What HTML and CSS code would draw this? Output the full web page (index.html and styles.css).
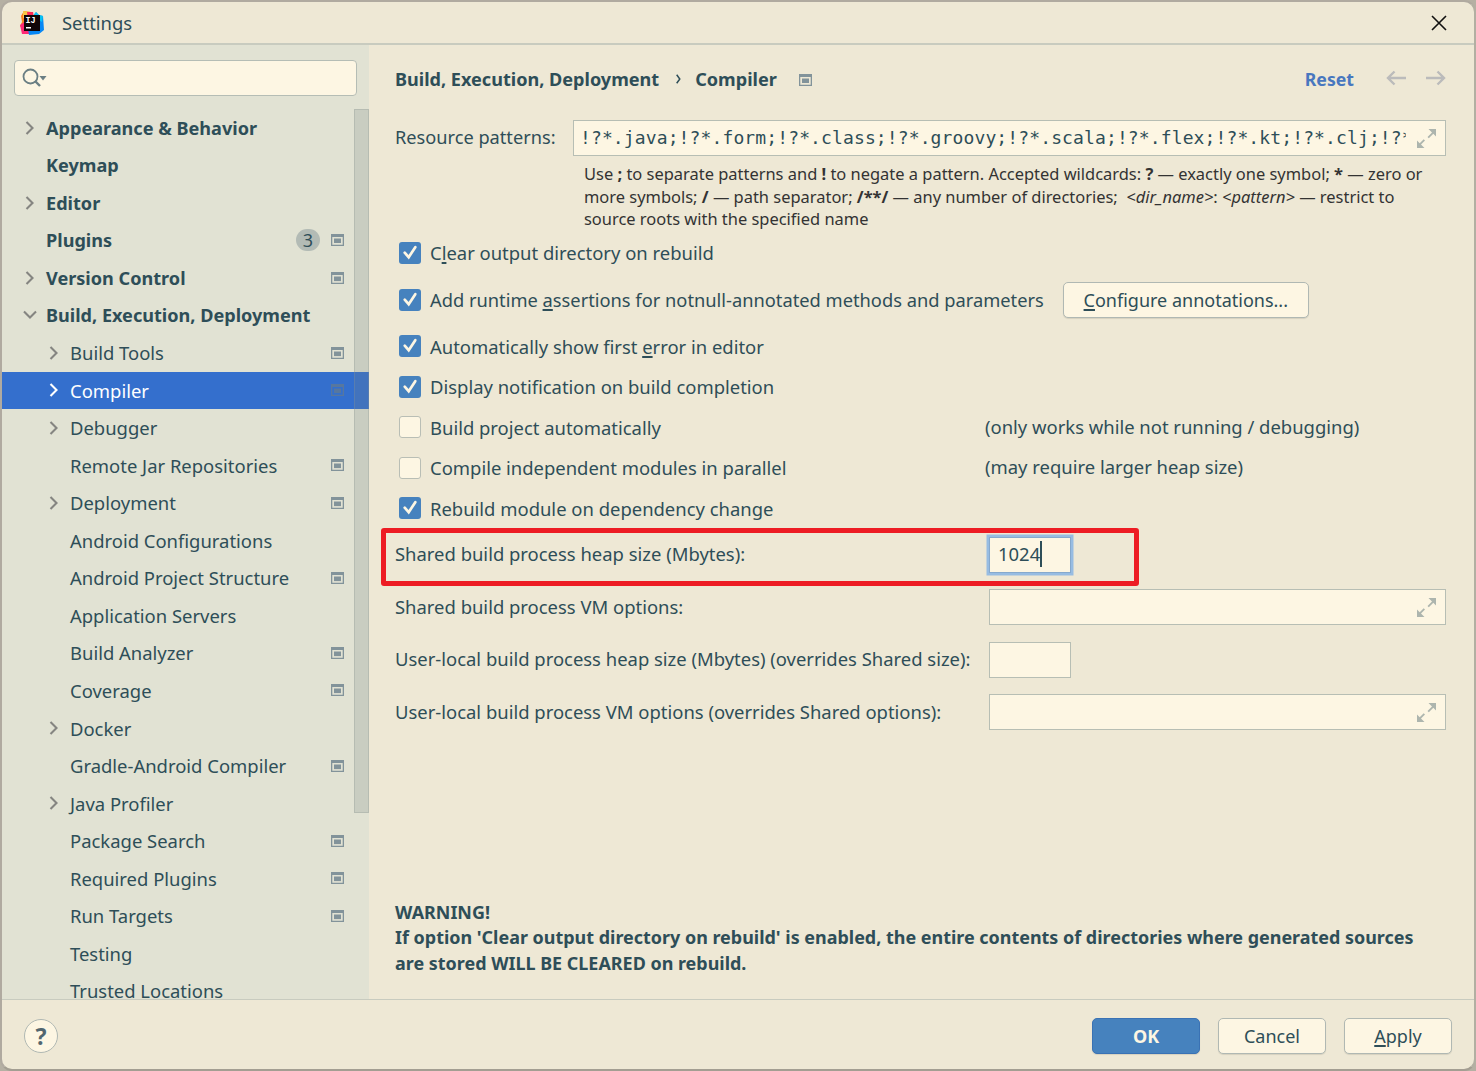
FILE: index.html
```
<!DOCTYPE html>
<html lang="en">

<head>
    <meta charset="UTF-8">
    <meta name="viewport" content="width=device-width, initial-scale=1.0">
    <title>Settings</title>
    <link rel="stylesheet" href="styles.css">
</head>

<body>
    <svg class="symbols">
        <symbol id="chevron-right" viewBox="0 0 10 14"><path d="M1.5 1l6 6-6 6" fill="none" stroke="currentColor" stroke-width="2.1"/></symbol>
        <symbol id="chevron-down" viewBox="0 0 14 10"><path d="M1 1.5l6 6 6-6" fill="none" stroke="currentColor" stroke-width="2.1"/></symbol>
        <symbol id="project" viewBox="0 0 13 12"><path d="M0 0h13v12H0zM1.3 3v7.7h10.4V3z" fill="currentColor" fill-rule="evenodd"/><path d="M3 4.5h7v4.6H3z" fill="currentColor"/></symbol>
        <symbol id="expand" viewBox="0 0 19 19"><path d="M11.5 0H19v7.5l-2.7-2.7-4.5 4.5-1.3-1.3 4.5-4.5zM0 11.5l2.7 2.7 4-4 1.3 1.3-4 4L7.5 19H0z" fill="currentColor"/></symbol>
        <symbol id="check" viewBox="0 0 22 22"><path d="M5.7 10.7l4 4.5 6.6-10" fill="none" stroke="#fdf6e3" stroke-width="2.7" stroke-linecap="round"/></symbol>
    </svg>

    <div class="window">
        <div class="titlebar">
            <svg class="logo" width="24" height="24" viewBox="0 0 24 24">
                <path d="M1 5l3-5 7 1 2 3-2 9-9 4-2-2 2-4z" fill="#fc801d"/>
                <path d="M3 0l8 1 3 4-4 5-7-3z" fill="#f9c846"/>
                <path d="M7 1h6l1 6-6 2z" fill="#fe2857"/>
                <path d="M0 14l7-5 6 9-2 5-9 0z" fill="#fe2875"/>
                <path d="M13 5l3-4 3 3 4 1 1 14-5 4-10 1-1-6z" fill="#0787f5"/>
                <path d="M13 5l3-4 3 3 4 1-1 6z" fill="#07c3f2"/>
                <rect x="4" y="4" width="16" height="16" fill="#100508"/>
                <rect x="6" y="16" width="5" height="1.5" fill="#fff"/>
                <text class="logo-text" x="5.5" y="12">IJ</text>
            </svg>
            <span class="title">Settings</span>
            <svg class="close" width="16" height="16" viewBox="0 0 16 16"><path d="M1 1l14 14M15 1L1 15" stroke="#111" stroke-width="1.6"/></svg>
        </div>

        <div class="content">
            <div class="sidebar">
                <div class="search">
                    <svg width="25" height="20" viewBox="0 0 25 20"><circle cx="8.5" cy="8.5" r="7" fill="none" stroke="#6b7f84" stroke-width="1.8"/><path d="M13 13l5 5" stroke="#6b7f84" stroke-width="2.4"/><path d="M17.5 8h7l-3.5 4.5z" fill="#6b7f84"/></svg>
                </div>
                <div class="tree">
                    <div class="item top"><svg class="arrow"><use href="#chevron-right"/></svg><span>Appearance &amp; Behavior</span></div>
                    <div class="item top"><span>Keymap</span></div>
                    <div class="item top"><svg class="arrow"><use href="#chevron-right"/></svg><span>Editor</span></div>
                    <div class="item top"><span>Plugins</span><b class="count">3</b><svg class="project"><use href="#project"/></svg></div>
                    <div class="item top"><svg class="arrow"><use href="#chevron-right"/></svg><span>Version Control</span><svg class="project"><use href="#project"/></svg></div>
                    <div class="item top"><svg class="arrow down"><use href="#chevron-down"/></svg><span>Build, Execution, Deployment</span></div>
                    <div class="item"><svg class="arrow"><use href="#chevron-right"/></svg><span>Build Tools</span><svg class="project"><use href="#project"/></svg></div>
                    <div class="item selected"><svg class="arrow"><use href="#chevron-right"/></svg><span>Compiler</span><svg class="project"><use href="#project"/></svg></div>
                    <div class="item"><svg class="arrow"><use href="#chevron-right"/></svg><span>Debugger</span></div>
                    <div class="item"><span>Remote Jar Repositories</span><svg class="project"><use href="#project"/></svg></div>
                    <div class="item"><svg class="arrow"><use href="#chevron-right"/></svg><span>Deployment</span><svg class="project"><use href="#project"/></svg></div>
                    <div class="item"><span>Android Configurations</span></div>
                    <div class="item"><span>Android Project Structure</span><svg class="project"><use href="#project"/></svg></div>
                    <div class="item"><span>Application Servers</span></div>
                    <div class="item"><span>Build Analyzer</span><svg class="project"><use href="#project"/></svg></div>
                    <div class="item"><span>Coverage</span><svg class="project"><use href="#project"/></svg></div>
                    <div class="item"><svg class="arrow"><use href="#chevron-right"/></svg><span>Docker</span></div>
                    <div class="item"><span>Gradle-Android Compiler</span><svg class="project"><use href="#project"/></svg></div>
                    <div class="item"><svg class="arrow"><use href="#chevron-right"/></svg><span>Java Profiler</span></div>
                    <div class="item"><span>Package Search</span><svg class="project"><use href="#project"/></svg></div>
                    <div class="item"><span>Required Plugins</span><svg class="project"><use href="#project"/></svg></div>
                    <div class="item"><span>Run Targets</span><svg class="project"><use href="#project"/></svg></div>
                    <div class="item"><span>Testing</span></div>
                    <div class="item"><span>Trusted Locations</span></div>
                    <div class="scrollbar"></div>
                </div>
            </div>

            <div class="main">
                <div class="breadcrumb">
                    <span>Build, Execution, Deployment</span>
                    <svg class="separator" width="5" height="10" viewBox="0 0 5 10"><path d="M.7.7L3.8 5 .7 9.3" fill="none" stroke="currentColor" stroke-width="1.5"/></svg>
                    <span>Compiler</span>
                    <svg class="project"><use href="#project"/></svg>
                    <a class="reset">Reset</a>
                    <svg class="nav" width="20" height="16" viewBox="0 0 20 16"><path d="M20 8H2M8.5 1.5L2 8l6.5 6.5" fill="none" stroke="currentColor" stroke-width="2.4"/></svg>
                    <svg class="nav" width="20" height="16" viewBox="0 0 20 16"><path d="M0 8h18M11.5 1.5L18 8l-6.5 6.5" fill="none" stroke="currentColor" stroke-width="2.4"/></svg>
                </div>

                <div class="patterns">
                    <label>Resource patterns:</label>
                    <div class="field">
                        <span class="mono">!?*.java;!?*.form;!?*.class;!?*.groovy;!?*.scala;!?*.flex;!?*.kt;!?*.clj;!?*</span>
                        <svg class="expand"><use href="#expand"/></svg>
                    </div>
                </div>
                <p class="help">Use <b>;</b> to separate patterns and <b>!</b> to negate a pattern. Accepted wildcards: <b>?</b> — exactly one symbol; <b>*</b> — zero or<br>more symbols; <b>/</b> — path separator; <b>/**/</b> — any number of directories; <i>&nbsp;&lt;dir_name&gt;</i>: <i>&lt;pattern&gt;</i> — restrict to<br>source roots with the specified name</p>

                <div class="options">
                    <div class="option"><span class="box checked"><svg><use href="#check"/></svg></span><label>C<u>l</u>ear output directory on rebuild</label></div>
                    <div class="option tall"><span class="box checked"><svg><use href="#check"/></svg></span><label>Add runtime <u>a</u>ssertions for notnull-annotated methods and parameters</label><button class="configure"><u>C</u>onfigure annotations...</button></div>
                    <div class="option"><span class="box checked"><svg><use href="#check"/></svg></span><label>Automatically show first <u>e</u>rror in editor</label></div>
                    <div class="option"><span class="box checked"><svg><use href="#check"/></svg></span><label>Display notification on build completion</label></div>
                    <div class="option"><span class="box"></span><label>Build project automatically</label><span class="note">(only works while not running / debugging)</span></div>
                    <div class="option"><span class="box"></span><label>Compile independent modules in parallel</label><span class="note">(may require larger heap size)</span></div>
                    <div class="option"><span class="box checked"><svg><use href="#check"/></svg></span><label>Rebuild module on dependency change</label></div>
                </div>

                <div class="form">
                    <label>Shared build process heap size (Mbytes):</label>
                    <div class="field small focused"><span>1024</span><span class="caret"></span></div>
                    <label>Shared build process VM options:</label>
                    <div class="field"><svg class="expand"><use href="#expand"/></svg></div>
                    <label>User-local build process heap size (Mbytes) (overrides Shared size):</label>
                    <div class="field small"></div>
                    <label>User-local build process VM options (overrides Shared options):</label>
                    <div class="field"><svg class="expand"><use href="#expand"/></svg></div>
                    <div class="highlight"></div>
                </div>

                <div class="warning">WARNING!<br>If option 'Clear output directory on rebuild' is enabled, the entire contents of directories where generated sources<br>are stored WILL BE CLEARED on rebuild.</div>
            </div>
        </div>

        <div class="footer">
            <button class="help-button">?</button>
            <button class="primary">OK</button>
            <button>Cancel</button>
            <button><u>A</u>pply</button>
        </div>
    </div>
</body>

</html>
```
FILE: styles.css
```
* {
    box-sizing: border-box;
}

body {
    margin: 0;
    height: 1071px;
    overflow: hidden;
    background: #b5b0a3;
    color: #2e4e58;
    font: 18.45px "Noto Sans", "Open Sans", sans-serif;
}

.symbols {
    display: none;
}

.window {
    display: flex;
    flex-direction: column;
    height: 1071px;
    border: 2px solid #b0aaa0;
    border-right-color: #b2afa2;
    border-bottom-color: #a39e92;
    border-radius: 12px;
    background: #eee8d5;
    overflow: hidden;
}

.titlebar {
    display: flex;
    align-items: center;
    flex: none;
    height: 43px;
    padding: 0 27px 0 18px;
    border-bottom: 2px solid #c8cbbf;
}

.logo-text {
    font: bold 8.5px "Liberation Mono", monospace;
    fill: #fff;
}

.title {
    margin-left: 18px;
}

.close {
    margin-left: auto;
}

.content {
    display: flex;
    flex: 1;
    min-height: 0;
}

.sidebar {
    display: flex;
    flex-direction: column;
    width: 367px;
    padding-top: 15px;
    background: #e1e2d3;
}

.search {
    display: flex;
    align-items: center;
    flex: none;
    width: 343px;
    height: 36px;
    margin: 0 0 13px 12px;
    padding-left: 7px;
    border: 1.5px solid #b5bdb5;
    border-radius: 4px;
    background: #fdf6e3;
}

.tree {
    position: relative;
    flex: 1;
    min-height: 0;
    overflow: hidden;
}

.item {
    display: grid;
    grid-template-columns: 20px 1fr 26px 37px;
    align-items: center;
    height: 37.53px;
    padding-left: 48px;
    white-space: nowrap;
}

.item.top {
    padding-left: 24px;
    font-size: 18.1px;
    font-weight: bold;
}

.item > span {
    grid-column: 2;
    grid-row: 1;
    min-width: 0;
}

.arrow {
    grid-column: 1;
    grid-row: 1;
    width: 10px;
    height: 14px;
    margin-left: -1.5px;
    color: #858581;
}

.arrow.down {
    width: 14px;
    height: 10px;
    margin-left: -3px;
}

.count {
    grid-column: 3;
    grid-row: 1;
    justify-self: end;
    width: 24px;
    height: 22px;
    margin-right: 12px;
    border-radius: 11px;
    background: #b3bbb5;
    font-size: 18px;
    font-weight: normal;
    line-height: 22px;
    text-align: center;
}

.project {
    width: 13px;
    height: 12px;
    color: #82939a;
}

.item .project {
    grid-column: 4;
    grid-row: 1;
    margin-left: -1px;
}

.item.selected {
    background: #346fcd;
    color: #fff;
}

.selected .arrow {
    color: #fff;
}

.selected .project {
    color: #57779f;
}

.scrollbar {
    position: absolute;
    top: 0;
    right: 0;
    width: 15px;
    height: 704px;
    border: 1px solid rgba(140, 150, 145, 0.3);
    background: rgba(120, 130, 130, 0.22);
}

.main {
    display: flex;
    flex-direction: column;
    flex: 1;
    padding: 15px 28px 0 26px;
}

.breadcrumb {
    display: flex;
    align-items: center;
    height: 38px;
    font-size: 18.08px;
    font-weight: bold;
}

.separator {
    margin: -1px 14px 0 17px;
}

.breadcrumb .project {
    margin: 1px 0 0 22px;
}

.reset {
    margin-left: auto;
    color: #4877bf;
    font-size: 17.7px;
}

.nav {
    margin: -2px 0 0 20px;
    color: #bbbbbb;
}

.reset + .nav {
    margin-left: 32px;
}

.patterns {
    display: grid;
    grid-template-columns: 178px 1fr;
    align-items: center;
    margin-top: 22px;
}

.patterns label {
    padding-bottom: 3px;
    font-size: 18.2px;
}

.field {
    display: flex;
    align-items: center;
    height: 36px;
    padding: 0 9px 0 6px;
    border: 1.5px solid #b7beb4;
    background: #fdf6e3;
}

.mono {
    width: 826px;
    padding-bottom: 2px;
    overflow: hidden;
    font: 18px "DejaVu Sans Mono", monospace;
    letter-spacing: 0.12px;
    white-space: nowrap;
}

.expand {
    width: 19px;
    height: 19px;
    margin-left: auto;
    color: #adb5ae;
}

.help {
    margin: 7px 0 0 189px;
    color: #333;
    font-size: 16.46px;
    line-height: 22.5px;
    white-space: nowrap;
}

.options {
    margin-top: 2px;
}

.option {
    display: flex;
    align-items: center;
    position: relative;
    height: 40.5px;
    padding-left: 4px;
}

.option.tall {
    height: 53px;
    font-size: 18.3px;
}

.box {
    width: 22px;
    height: 22px;
    margin-right: 9px;
    border: 1.5px solid #b9beb5;
    border-radius: 3px;
    background: #fdf6e3;
}

.box.checked {
    border: 0;
    background: #4682be;
}

.box svg {
    display: block;
    width: 22px;
    height: 22px;
}

u {
    text-underline-offset: 2px;
    text-decoration-thickness: 1.5px;
}

.note {
    position: absolute;
    left: 590px;
    padding-bottom: 2px;
}

button {
    height: 36px;
    padding: 0;
    border: 1.5px solid #b0b8b3;
    border-radius: 5px;
    background: #fdf6e3;
    box-shadow: 0 1px 1px rgba(0, 0, 0, 0.1);
    color: inherit;
    font: inherit;
    font-size: 18px;
}

.configure {
    width: 246px;
    margin-left: 19px;
}

.form {
    display: grid;
    grid-template-columns: 594px 1fr;
    grid-auto-rows: 52.5px;
    align-items: center;
    position: relative;
    white-space: nowrap;
}

.form label {
    padding-bottom: 2px;
}

.field.small {
    width: 82px;
    padding-left: 8px;
}

.field.focused {
    border-color: #86a9cd;
    box-shadow: 0 0 0 2.5px #97bce2;
}

.focused span:first-child {
    padding-bottom: 2px;
}

.caret {
    width: 2px;
    height: 26px;
    margin-bottom: 2px;
    background: #2e4e58;
}

/* red frame over the heap size row */
.highlight {
    position: absolute;
    top: -1px;
    left: -14px;
    width: 758px;
    height: 58px;
    border: 5px solid #ed1c24;
    border-radius: 3px;
}

.warning {
    margin-top: auto;
    margin-bottom: 23px;
    font-size: 17.95px;
    font-weight: bold;
    line-height: 25.5px;
    white-space: nowrap;
}

.footer {
    display: flex;
    align-items: center;
    flex: none;
    gap: 18px;
    height: 70px;
    padding: 2px 22px 0;
    border-top: 1px solid #c8cbbf;
}

.footer button {
    width: 108px;
}

.footer .help-button {
    width: 34px;
    height: 34px;
    margin-right: auto;
    border-radius: 50%;
    box-shadow: none;
    color: #52666f;
    font-size: 23px;
    font-weight: bold;
    line-height: 30px;
}

.footer .primary {
    border-color: #3a72b4;
    background: #4682be;
    color: #fdf6e3;
    font-weight: bold;
}
```
